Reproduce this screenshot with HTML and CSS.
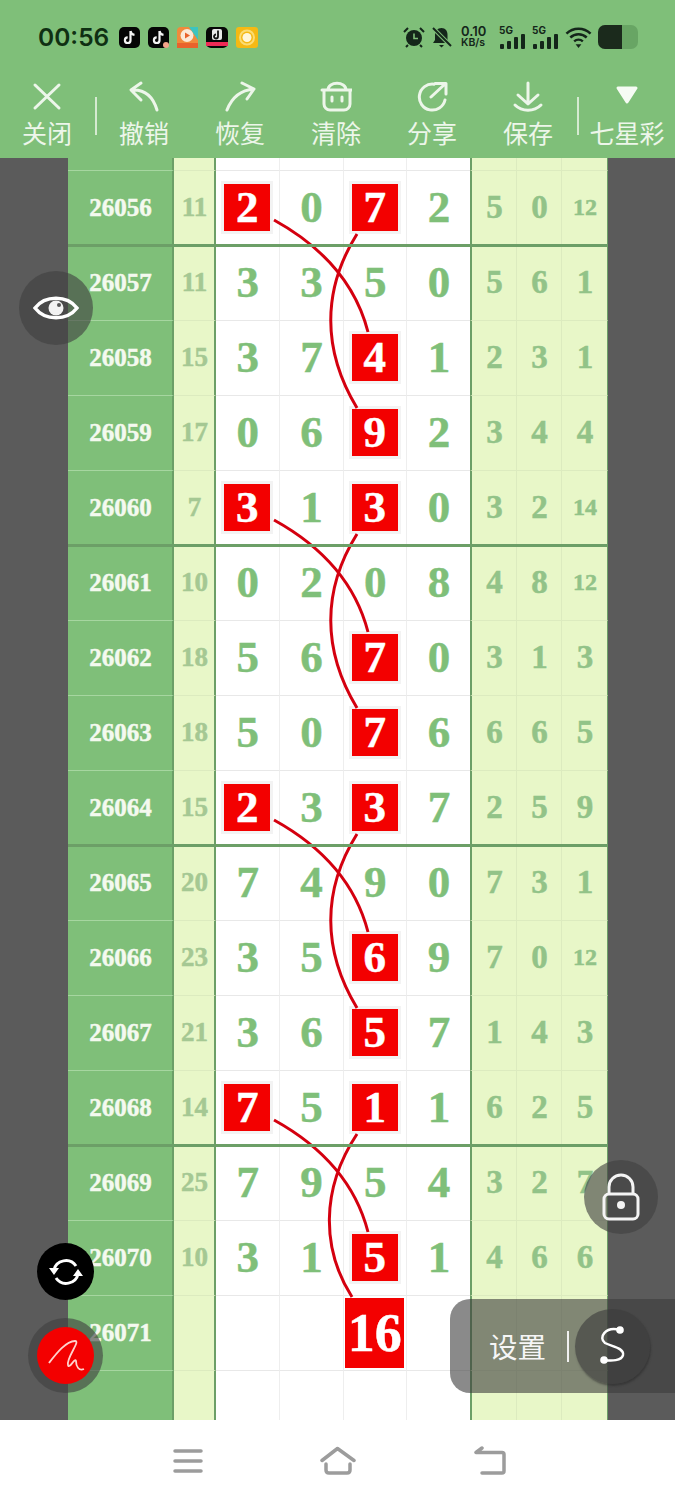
FILE: index.html
```html
<!DOCTYPE html>
<html lang="zh-CN">
<head>
    <meta charset="UTF-8">
    <meta name="viewport" content="width=device-width, initial-scale=1.0"/>
    <title>七星彩</title>
    <link rel="stylesheet" href="styles.css">
</head>
<body>
<div class="page">
    <header class="top">
        <div class="status">
            <span class="time">00:56</span>
            <div class="apps">
                <svg class="app" viewBox="0 0 21 21"><rect width="21" height="21" rx="5" fill="#050505"/><path d="M11.500 4v9.200a2.800 2.800 0 1 1-2.800-2.800M11.500 4c.3 2.300 1.700 3.600 4 3.900" fill="none" stroke="#f4f4f4" stroke-width="2.200"/></svg>
                <svg class="app" viewBox="0 0 21 21"><rect width="21" height="21" rx="5" fill="#050505"/><path d="M11.500 4v9.200a2.800 2.800 0 1 1-2.800-2.800M11.500 4c.3 2.300 1.700 3.600 4 3.900" fill="none" stroke="#f4f4f4" stroke-width="2.200"/><circle cx="18" cy="18" r="3" fill="#f3a48a"/></svg>
                <svg class="app" viewBox="0 0 21 21"><rect width="21" height="21" rx="4" fill="#f08a3c"/><path d="M12 0h9v13z" fill="#3cc4c0"/><circle cx="10" cy="8.500" r="6.500" fill="#fbe9d8"/><path d="M8 5.500l5 3-5 3z" fill="#e9622c"/><rect y="16" width="21" height="5" fill="#e9622c"/></svg>
                <svg class="app app-wide" viewBox="0 0 22 21"><rect width="22" height="21" rx="5" fill="#070707"/><rect x="6" y="2" width="10" height="11" rx="2" fill="#e8e8e8"/><path d="M12 3.500v6a2 2 0 1 1-2-2" fill="none" stroke="#111" stroke-width="1.800"/><rect y="15" width="22" height="4" fill="#ee2a55"/></svg>
                <svg class="app app-wide" viewBox="0 0 22 21"><rect width="22" height="21" rx="3" fill="#f5b914"/><circle cx="11" cy="10.500" r="7" fill="none" stroke="#fbdc74" stroke-width="2"/><circle cx="11" cy="10.500" r="4.500" fill="#fff6d8"/></svg>
            </div>
            <div class="sys">
                <svg class="sys-icon" viewBox="0 0 22 22" width="22" height="22"><circle cx="11" cy="12" r="8" fill="#14261a"/><path d="M11 7.500V12.500H15" fill="none" stroke="#7fbf79" stroke-width="1.600"/><path d="M1 6l4-4M21 6l-4-4M5 19l-2 2M17 19l2 2" stroke="#14261a" stroke-width="2"/></svg>
                <svg class="sys-icon" viewBox="0 0 21 22" width="21" height="22"><path d="M10.500 2c4 0 6 3 6 7v5l2 3H2l2-3V9c0-4 2.500-7 6.500-7zM8 19h5l-2.500 2.500z" fill="#14261a"/><path d="M2 2l18 18" stroke="#7fbf79" stroke-width="4"/><path d="M2 2l18 18" stroke="#14261a" stroke-width="2"/></svg>
                <span class="speed"><b>0.10</b><i>KB/s</i></span>
                <span class="signal"><em>5G</em><svg viewBox="0 0 27 15" width="27" height="15"><rect x="1" y="10" width="4" height="5" rx="1"/><rect x="8" y="7" width="4" height="8" rx="1"/><rect x="15" y="3" width="4" height="12" rx="1"/><rect x="22" y="0" width="4" height="15" rx="1"/></svg></span>
                <span class="signal"><em>5G</em><svg viewBox="0 0 27 15" width="27" height="15"><rect x="1" y="10" width="4" height="5" rx="1"/><rect x="8" y="7" width="4" height="8" rx="1"/><rect x="15" y="3" width="4" height="12" rx="1"/><rect x="22" y="0" width="4" height="15" rx="1"/></svg></span>
                <svg class="sys-icon" viewBox="0 0 28 23" width="27" height="23"><path d="M1.500 7.500a18 18 0 0 1 25 0M5.500 11.500a12.500 12.500 0 0 1 17 0M9.500 15.500a7 7 0 0 1 9 0" fill="none" stroke="#14261a" stroke-width="2.600"/><path d="M11 18.500h6L14 22.500z" fill="#14261a"/></svg>
                <div class="battery"><div class="battery-fill"></div></div>
            </div>
        </div>
        <nav class="tools">
            <div class="tool tool-first">
                <svg class="tool-icon" viewBox="0 0 32 32"><path d="M4 5l24 23M28 5L4 28"/></svg>
                <span>关闭</span>
            </div>
            <div class="tool-sep"></div>
            <div class="tool">
                <svg class="tool-icon" viewBox="0 0 32 32"><path d="M13 3L3 10l10 10M3 10c13-1 22 6 26 20"/></svg>
                <span>撤销</span>
            </div>
            <div class="tool">
                <svg class="tool-icon" viewBox="0 0 32 32"><path d="M18 3l12 6-7 10M3 30C8 17 18 10 30 9"/></svg>
                <span>恢复</span>
            </div>
            <div class="tool">
                <svg class="tool-icon" viewBox="0 0 32 32"><path d="M4 10V24a6 6 0 0 0 6 6H24a6 6 0 0 0 6-6V10M2 10H32M8 10C8 1 26 1 26 10M12 17v4M22 17v4"/></svg>
                <span>清除</span>
            </div>
            <div class="tool">
                <svg class="tool-icon" viewBox="0 0 32 32"><path d="M18 4.200A13 13 0 1 0 29 20M15 17L29 4M19 3.500h11V14"/></svg>
                <span>分享</span>
            </div>
            <div class="tool">
                <svg class="tool-icon" viewBox="0 0 32 32"><path d="M16 3v19M6 15l10 9 10-9M3 25c7 7 19 7 26 0"/></svg>
                <span>保存</span>
            </div>
            <div class="tool-sep"></div>
            <div class="tool tool-last">
                <svg class="tool-icon tool-solid" viewBox="0 0 32 32"><path d="M7 8h18L16 22z"/></svg>
                <span>七星彩</span>
            </div>
        </nav>
    </header>

    <main class="board">
        <div class="chart">
            <div class="row row-cut">
                <div class="issue"></div><div class="sum"></div>
                <div class="num"></div><div class="num"></div><div class="num"></div><div class="num"></div>
                <div class="ext"></div><div class="ext"></div><div class="ext"></div>
            </div>
            <div class="row">
                <div class="issue">26056</div><div class="sum">11</div>
                <div class="num"><span class="hit">2</span></div><div class="num">0</div><div class="num"><span class="hit">7</span></div><div class="num">2</div>
                <div class="ext">5</div><div class="ext">0</div><div class="ext small">12</div>
            </div>
            <div class="row start">
                <div class="issue">26057</div><div class="sum">11</div>
                <div class="num">3</div><div class="num">3</div><div class="num">5</div><div class="num">0</div>
                <div class="ext">5</div><div class="ext">6</div><div class="ext">1</div>
            </div>
            <div class="row">
                <div class="issue">26058</div><div class="sum">15</div>
                <div class="num">3</div><div class="num">7</div><div class="num"><span class="hit">4</span></div><div class="num">1</div>
                <div class="ext">2</div><div class="ext">3</div><div class="ext">1</div>
            </div>
            <div class="row">
                <div class="issue">26059</div><div class="sum">17</div>
                <div class="num">0</div><div class="num">6</div><div class="num"><span class="hit">9</span></div><div class="num">2</div>
                <div class="ext">3</div><div class="ext">4</div><div class="ext">4</div>
            </div>
            <div class="row">
                <div class="issue">26060</div><div class="sum">7</div>
                <div class="num"><span class="hit">3</span></div><div class="num">1</div><div class="num"><span class="hit">3</span></div><div class="num">0</div>
                <div class="ext">3</div><div class="ext">2</div><div class="ext small">14</div>
            </div>
            <div class="row start">
                <div class="issue">26061</div><div class="sum">10</div>
                <div class="num">0</div><div class="num">2</div><div class="num">0</div><div class="num">8</div>
                <div class="ext">4</div><div class="ext">8</div><div class="ext small">12</div>
            </div>
            <div class="row">
                <div class="issue">26062</div><div class="sum">18</div>
                <div class="num">5</div><div class="num">6</div><div class="num"><span class="hit">7</span></div><div class="num">0</div>
                <div class="ext">3</div><div class="ext">1</div><div class="ext">3</div>
            </div>
            <div class="row">
                <div class="issue">26063</div><div class="sum">18</div>
                <div class="num">5</div><div class="num">0</div><div class="num"><span class="hit">7</span></div><div class="num">6</div>
                <div class="ext">6</div><div class="ext">6</div><div class="ext">5</div>
            </div>
            <div class="row">
                <div class="issue">26064</div><div class="sum">15</div>
                <div class="num"><span class="hit">2</span></div><div class="num">3</div><div class="num"><span class="hit">3</span></div><div class="num">7</div>
                <div class="ext">2</div><div class="ext">5</div><div class="ext">9</div>
            </div>
            <div class="row start">
                <div class="issue">26065</div><div class="sum">20</div>
                <div class="num">7</div><div class="num">4</div><div class="num">9</div><div class="num">0</div>
                <div class="ext">7</div><div class="ext">3</div><div class="ext">1</div>
            </div>
            <div class="row">
                <div class="issue">26066</div><div class="sum">23</div>
                <div class="num">3</div><div class="num">5</div><div class="num"><span class="hit">6</span></div><div class="num">9</div>
                <div class="ext">7</div><div class="ext">0</div><div class="ext small">12</div>
            </div>
            <div class="row">
                <div class="issue">26067</div><div class="sum">21</div>
                <div class="num">3</div><div class="num">6</div><div class="num"><span class="hit">5</span></div><div class="num">7</div>
                <div class="ext">1</div><div class="ext">4</div><div class="ext">3</div>
            </div>
            <div class="row">
                <div class="issue">26068</div><div class="sum">14</div>
                <div class="num"><span class="hit">7</span></div><div class="num">5</div><div class="num"><span class="hit">1</span></div><div class="num">1</div>
                <div class="ext">6</div><div class="ext">2</div><div class="ext">5</div>
            </div>
            <div class="row start">
                <div class="issue">26069</div><div class="sum">25</div>
                <div class="num">7</div><div class="num">9</div><div class="num">5</div><div class="num">4</div>
                <div class="ext">3</div><div class="ext">2</div><div class="ext">7</div>
            </div>
            <div class="row">
                <div class="issue">26070</div><div class="sum">10</div>
                <div class="num">3</div><div class="num">1</div><div class="num"><span class="hit">5</span></div><div class="num">1</div>
                <div class="ext">4</div><div class="ext">6</div><div class="ext">6</div>
            </div>
            <div class="row">
                <div class="issue">26071</div><div class="sum"></div>
                <div class="num"></div><div class="num"></div><div class="num"><span class="hit hit-big">16</span></div><div class="num"></div>
                <div class="ext"></div><div class="ext"></div><div class="ext"></div>
            </div>
            <div class="row row-tail">
                <div class="issue"></div><div class="sum"></div>
                <div class="num"></div><div class="num"></div><div class="num"></div><div class="num"></div>
                <div class="ext"></div><div class="ext"></div><div class="ext"></div>
            </div>
        </div>
    </main>

    <footer class="navbar">
        <svg class="nav-icon" viewBox="0 0 36 30"><path d="M6 5h26M6 15h26M6 25h26"/></svg>
        <svg class="nav-icon" viewBox="0 0 36 30"><path d="M2 14.500L17.500 2.500 34 14.500M6 18v6q0 3 3 3H27q3 0 3-3V18"/></svg>
        <svg class="nav-icon" viewBox="0 0 36 30"><path d="M11 2L5 6.500H31q2 0 2 2V25q0 2-2 2H11"/></svg>
    </footer>

    <!-- curves over the chart, page coordinates -->
    <svg class="links" viewBox="0 0 675 1500">
        <path d="M274 220Q350 262 368 332M357 234C322 290 322 350 357 408"/>
        <path d="M274 520Q350 562 368 632M357 534C322 590 322 650 357 708"/>
        <path d="M274 820Q350 862 368 932M357 834C322 890 322 950 357 1008"/>
        <path d="M274 1120Q350 1162 368 1232M357 1134C320 1190 322 1250 352 1297"/>
    </svg>

    <div class="float float-eye">
        <svg viewBox="0 0 46 32" width="46" height="32"><path d="M2 16C12 3 34 3 44 16 34 29 12 29 2 16z" fill="none" stroke="#fff" stroke-width="3.500"/><circle cx="23" cy="16" r="7.500" fill="#f2f2f2"/><circle cx="26" cy="13" r="2" fill="#555"/></svg>
    </div>
    <div class="float float-lock">
        <svg viewBox="0 0 38 48" width="38" height="48"><rect x="2" y="21" width="34" height="25" rx="5" fill="none" stroke="#f4f4f4" stroke-width="3"/><path d="M7 21v-7a12 12 0 0 1 24 0v7" fill="none" stroke="#f4f4f4" stroke-width="3"/><circle cx="19" cy="32" r="4" fill="#f4f4f4"/></svg>
    </div>
    <div class="float-sync">
        <svg viewBox="0 0 34 34" width="34" height="34"><path d="M5 15C7 5 21 2 27 11M29 19C27 29 13 32 7 23" fill="none" stroke="#fff" stroke-width="3"/><path d="M0 13l10 0-5 7zM34 21l-10 0 5-7z" fill="#fff"/></svg>
    </div>
    <div class="float-pen">
        <div class="pen-dot">
            <svg viewBox="0 0 40 40" width="40" height="40"><path d="M3 27C10 18 20 5 29 5 35 5 20 22 22 29 23 34 29 21 30 25 30 31 33 35 38 33" fill="none" stroke="#ffd2cc" stroke-width="1.800"/></svg>
        </div>
    </div>
    <div class="dock">
        <span class="dock-label">设置</span>
        <span class="dock-sep"></span>
        <div class="dock-btn">
            <svg viewBox="0 0 40 46" width="40" height="46"><path d="M27 7C12 3 5 15 12 20 20 24 31 25 30 32 29 38 18 38 11 37" fill="none" stroke="#fff" stroke-width="2.500"/><circle cx="27" cy="7" r="3.800" fill="#fff"/><circle cx="11" cy="37" r="3.800" fill="#fff"/></svg>
        </div>
    </div>
</div>
</body>
</html>
```

FILE: styles.css
```css
* {
    box-sizing: border-box;
}

body {
    margin: 0;
    background: #fff;
    overflow: hidden;
}

.page {
    position: relative;
    width: 675px;
    height: 1500px;
    overflow: hidden;
    font-family: "Noto Sans CJK SC", "Noto Sans", sans-serif;
}

/* top bar */
.top {
    height: 158px;
    background: #7fbf79;
}

.status {
    display: flex;
    align-items: center;
    height: 74px;
    padding: 0 37px 0 38px;
}

.time {
    font-family: Inter, sans-serif;
    font-size: 24.500px;
    font-weight: 600;
    color: #0f3013;
}

.apps {
    display: flex;
    gap: 8px;
    margin-left: 10px;
}

.app {
    display: block;
    width: 21px;
    height: 21px;
}

.app-wide {
    width: 22px;
}

.sys {
    display: flex;
    align-items: center;
    gap: 6px;
    margin-left: auto;
    color: #14261a;
}

.sys-icon {
    display: block;
}

.speed {
    display: flex;
    flex-direction: column;
    width: 28px;
    margin: 0 4px 0 3px;
    font-family: Inter, sans-serif;
    line-height: 12px;
}

.speed b {
    font-size: 13px;
    font-weight: 600;
}

.speed i {
    font-size: 10.500px;
    font-style: normal;
    font-weight: 600;
}

.signal {
    position: relative;
    display: block;
    width: 27px;
    height: 24px;
    padding-top: 9px;
}

.signal em {
    position: absolute;
    top: 0;
    left: 0;
    font-family: Inter, sans-serif;
    font-size: 10px;
    font-style: normal;
    font-weight: 700;
    line-height: 10px;
}

.signal svg {
    display: block;
    fill: #14261a;
}

.battery {
    width: 40px;
    height: 24px;
    border-radius: 7px;
    background: #68a564;
    overflow: hidden;
}

.battery-fill {
    width: 24px;
    height: 100%;
    background: #1b2a1c;
}

.tools {
    display: flex;
    height: 84px;
}

.tool {
    display: flex;
    flex-direction: column;
    align-items: center;
    flex: 0 0 96px;
    padding-top: 6px;
    color: #edf6ea;
    font-size: 25px;
    line-height: 34px;
    white-space: nowrap;
}

.tool-first {
    flex-basis: 94px;
}

.tool-last {
    flex-basis: 98px;
}

.tool-icon {
    display: block;
    flex: none;
    width: 32px;
    height: 32px;
    margin-bottom: 3px;
    fill: none;
    stroke: #edf6ea;
    stroke-width: 3;
    stroke-linecap: round;
    stroke-linejoin: round;
}

.tool-solid {
    fill: #f6fbf4;
    stroke: #f6fbf4;
}

.tool-sep {
    flex: 0 0 2px;
    height: 38px;
    margin: 23px -1px 0 1px;
    background: #d5ead1;
}

/* chart */
.board {
    display: flex;
    height: 1262px;
    padding-left: 68px;
    background: #5b5b5b;
    overflow: hidden;
}

.chart {
    flex: none;
    width: 540px;
}

.row {
    position: relative;
    display: grid;
    grid-template-columns: 106px 42px 63.500px 64px 63.500px 63px 47px 45px 46px;
    height: 75px;
    font-family: "Liberation Serif", serif;
    font-weight: 700;
    -webkit-text-stroke: 0.500px;
}

.row-cut {
    height: 12px;
}

.row-tail {
    height: 50px;
}

.row.start::before {
    content: "";
    position: absolute;
    top: -1px;
    left: 0;
    right: 0;
    z-index: 1;
    height: 3px;
    background: #6c9f67;
}

.row > div {
    display: flex;
    align-items: center;
    justify-content: center;
    padding: 0 0 1px 1px;
    border-top: 1px solid transparent;
}

.row-cut > div {
    border-top: 0;
}

.issue {
    background: #7fbf79;
    color: #f4f9ef;
    font-size: 25px;
    border-right: 2px solid #6c9f67;
    border-top-color: #a6d6a0 !important;
}

.sum {
    background: #e8f7c8;
    color: #a5c893;
    font-size: 27px;
    border-right: 2px solid #6c9f67;
    border-top-color: #dcebbf !important;
}

.num {
    background: #fff;
    color: #7fbf79;
    font-size: 45px;
    line-height: 1;
    border-right: 1px solid #eeeeee;
    border-top-color: #e8e8e8 !important;
}

.row > .num:has(.hit) {
    padding-left: 0;
}

.num:nth-child(6) {
    border-right: 0;
}

.ext {
    background: #e8f7c8;
    color: #92c388;
    font-size: 33px;
    border-right: 1px solid #dcebbf;
    border-top-color: #dcebbf !important;
}

.ext:nth-child(7) {
    border-left: 2px solid #6c9f67;
}

.ext:nth-child(9) {
    border-right: 1px solid #6c9f67;
}

.ext.small {
    font-size: 24px;
}

.hit {
    display: flex;
    align-items: center;
    justify-content: center;
    width: 46px;
    height: 47px;
    background: #f30000;
    color: #fff;
    box-shadow: 0 0 0 3px #f3f3f3;
}

.hit-big {
    flex: none;
    width: 59px;
    height: 70px;
    font-size: 54px;
    box-shadow: none;
}

.links {
    position: absolute;
    top: 0;
    left: 0;
    width: 675px;
    height: 1500px;
    fill: none;
    stroke: #d4000f;
    stroke-width: 3;
    pointer-events: none;
}

/* bottom nav */
.navbar {
    display: flex;
    align-items: center;
    justify-content: center;
    gap: 115px;
    height: 80px;
    padding-top: 1px;
    background: #fff;
}

.nav-icon {
    display: block;
    width: 36px;
    height: 30px;
    fill: none;
    stroke: #9c9c9c;
    stroke-width: 3.500;
    stroke-linecap: round;
    stroke-linejoin: round;
}

/* floating buttons */
.float {
    position: absolute;
    display: flex;
    align-items: center;
    justify-content: center;
    width: 74px;
    height: 74px;
    border-radius: 50%;
    background: rgba(64, 64, 64, 0.62);
}

.float-eye {
    top: 271px;
    left: 19px;
}

.float-lock {
    top: 1160px;
    left: 584px;
}

.float-sync {
    position: absolute;
    top: 1243px;
    left: 37px;
    display: flex;
    align-items: center;
    justify-content: center;
    width: 57px;
    height: 57px;
    border-radius: 50%;
    background: #000;
}

.float-pen {
    position: absolute;
    top: 1318px;
    left: 28px;
    display: flex;
    align-items: center;
    justify-content: center;
    width: 75px;
    height: 75px;
    border-radius: 50%;
    background: rgba(64, 64, 64, 0.62);
}

.pen-dot {
    display: flex;
    align-items: center;
    justify-content: center;
    width: 57px;
    height: 57px;
    border-radius: 50%;
    background: #f30000;
}

.dock {
    position: absolute;
    top: 1299px;
    left: 450px;
    display: flex;
    align-items: center;
    width: 225px;
    height: 94px;
    padding-left: 39px;
    border-radius: 20px 0 0 20px;
    background: rgba(60, 60, 60, 0.6);
    color: #f6f6f6;
}

.dock-label {
    font-size: 28.500px;
    line-height: 1;
}

.dock-sep {
    width: 2px;
    height: 31px;
    margin-left: 21px;
    background: #f0f0f0;
}

.dock-btn {
    display: flex;
    align-items: center;
    justify-content: center;
    width: 75px;
    height: 75px;
    margin-left: 6px;
    border-radius: 50%;
    background: rgba(60, 60, 60, 0.62);
    box-shadow: 1px 2px 2px rgba(40, 40, 40, 0.5);
}
```
